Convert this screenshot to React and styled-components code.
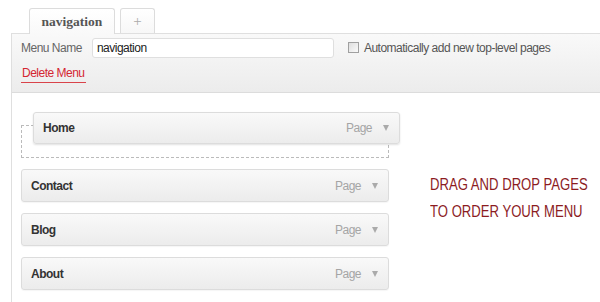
import styled, { createGlobalStyle, css } from "styled-components";

const Global = createGlobalStyle`
  html, body {
    margin: 0;
    background: #fff;
  }
  body {
    font-family: "Liberation Sans", Arial, sans-serif;
    font-size: 12px;
    letter-spacing: -0.5px;
    color: #333;
  }
`

const Page = styled.div`
  min-height: 100vh;
  display: flex;
  flex-direction: column;
  box-sizing: border-box;
`

const TabBar = styled.div`
  display: flex;
  align-items: flex-start;
  gap: 5px;
  padding: 8px 0 0 29px;
  height: 25px;
`

const Tab = styled.div`
  box-sizing: border-box;
  height: 25px;
  display: flex;
  align-items: center;
  justify-content: center;
  border: 1px solid #dcdcdc;
  border-bottom: none;
  border-radius: 3px 3px 0 0;
  background: linear-gradient(#ffffff, #f7f7f7);
  color: #aaa;
  font-family: "Liberation Serif", serif;
  font-size: 15px;
  letter-spacing: 0;
  width: 35px;

  ${p => p.$active && css`
    width: 86px;
    height: 26px;
    margin-bottom: -1px;
    position: relative;
    z-index: 1;
    background: linear-gradient(#ffffff, #f9f9f9);
    color: #555;
    font-weight: bold;
    font-size: 13.5px;
    padding-top: 1px;
  `}
`

const Panel = styled.div`
  flex: 1;
  margin-left: 11px;
  border-left: 1px solid #dfdfdf;
  border-top: 1px solid #dfdfdf;
  display: flex;
  flex-direction: column;
`

const Header = styled.div`
  box-sizing: border-box;
  height: 59px;
  padding: 3px 0 0 9px;
  background: linear-gradient(#f9f9f9, #ececec);
  border-bottom: 1px solid #dcdcdc;
`

const FieldRow = styled.div`
  display: flex;
  align-items: center;
  height: 21px;
`

const Label = styled.label`
  color: #666;
  margin-right: 10px;
`

const NameInput = styled.input`
  box-sizing: border-box;
  width: 242px;
  height: 20px;
  border: 1px solid #dfdfdf;
  border-radius: 3px;
  background: #fff;
  padding: 0 4px;
  font: inherit;
  letter-spacing: inherit;
  color: #222;
  outline: none;
`

const CheckLabel = styled.label`
  display: flex;
  align-items: center;
  gap: 5px;
  margin-left: 14px;
  color: #555;
`

const Box = styled.span`
  box-sizing: border-box;
  width: 11px;
  height: 11px;
  border: 1px solid #a0a0a0;
  background: linear-gradient(135deg, #dedede, #fafafa);
`

const DeleteLink = styled.a`
  display: inline-block;
  margin-top: 8px;
  line-height: 15px;
  padding: 0 1px 1px;
  color: #d42630;
  border-bottom: 1px solid #d9434a;
  text-decoration: none;
  cursor: pointer;
`

const Body = styled.div`
  display: flex;
  align-items: flex-start;
  padding: 32px 0 0 9px;
`

const MenuList = styled.div`
  flex: 0 0 368px;
  display: flex;
  flex-direction: column;
  gap: 11px;
`

const Placeholder = styled.div`
  position: relative;
  box-sizing: border-box;
  height: 33px;
  border: 1px dashed #bbb;
`

const Item = styled.div`
  box-sizing: border-box;
  height: 33px;
  display: flex;
  align-items: center;
  padding: 0 10px 0 9px;
  border: 1px solid #dcdcdc;
  border-radius: 3px;
  background: linear-gradient(#f9f9f9, #ececec);
  box-shadow: 0 1px 1px rgba(0, 0, 0, 0.04);

  ${p => p.$dragging && css`
    position: absolute;
    left: 11px;
    top: -14px;
    width: 367px;
    height: 32px;
    box-shadow: 0 1px 2px rgba(0, 0, 0, 0.12);
  `}
`

const Title = styled.span`
  flex: 1;
  font-weight: bold;
  color: #333;
`

const Type = styled.span`
  color: #a5a5a5;
  margin-right: 11px;
`

const Caret = styled.span`
  width: 0;
  height: 0;
  border-left: 3px solid transparent;
  border-right: 3px solid transparent;
  border-top: 6px solid #aaa;
`

const Hint = styled.div`
  margin: 46px 0 0 41px;
  font-size: 16px;
  letter-spacing: 0;
  line-height: 27px;
  color: #8c1c1f;
  white-space: nowrap;
  transform: scaleX(0.82);
  transform-origin: left top;
`

const MenuItem = ({ title, dragging }) => (
  <Item $dragging={dragging}>
    <Title>{title}</Title>
    <Type>Page</Type>
    <Caret />
  </Item>
)

const App = () => {
  return (
    <Page>
      <Global />
      <TabBar>
        <Tab $active>navigation</Tab>
        <Tab>+</Tab>
      </TabBar>
      <Panel>
        <Header>
          <FieldRow>
            <Label>Menu Name</Label>
            <NameInput defaultValue="navigation" />
            <CheckLabel><Box />Automatically add new top-level pages</CheckLabel>
          </FieldRow>
          <DeleteLink>Delete Menu</DeleteLink>
        </Header>
        <Body>
          <MenuList>
            <Placeholder>
              <MenuItem title="Home" dragging />
            </Placeholder>
            <MenuItem title="Contact" />
            <MenuItem title="Blog" />
            <MenuItem title="About" />
          </MenuList>
          <Hint>DRAG AND DROP PAGES<br />TO ORDER YOUR MENU</Hint>
        </Body>
      </Panel>
    </Page>
  );
}

export default App;
